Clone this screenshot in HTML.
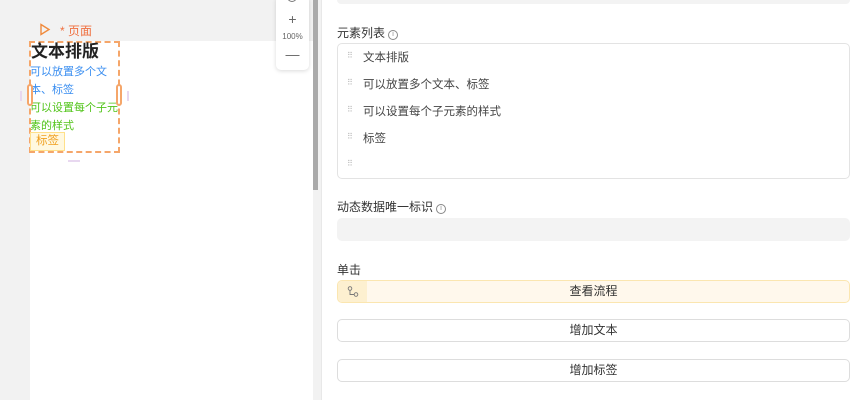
<!DOCTYPE html>
<html><head><meta charset="utf-8"><style>
*{margin:0;padding:0;box-sizing:border-box}
body{width:857px;height:400px;overflow:hidden;background:#fff;font-family:"Liberation Sans","Noto Sans CJK SC",sans-serif;font-size:12px;color:#333;position:relative}
.a{position:absolute}
.lbl{position:absolute;left:337px;font-size:12px;color:#333}
.info{display:inline-block;width:10px;height:10px;border:1px solid #888;border-radius:50%;font-size:7px;line-height:8px;text-align:center;color:#888;vertical-align:1px;margin-left:3px}
.btn{position:absolute;left:337px;width:513px;height:23px;border:1px solid #ddd;border-radius:5px;text-align:center;line-height:21px;font-size:12px;color:#333}
.item{position:absolute;left:10px;font-size:11.5px;color:#444}
.dots{position:absolute;left:-1px;color:#bbb;font-size:8px;letter-spacing:-1px}
</style></head><body>
<div class="a" style="left:0;top:0;width:321px;height:400px;background:#f2f2f2"></div>
<div class="a" style="left:30px;top:41px;width:283px;height:359px;background:#fff"></div>
<div class="a" style="left:313px;top:0;width:5px;height:190px;background:#aaa"></div>
<div class="a" style="left:321px;top:0;width:1px;height:400px;background:#e8e8e8"></div>
<div class="a" style="left:276px;top:-4px;width:33px;height:74px;background:#fff;border-radius:5px;box-shadow:0 1px 4px rgba(0,0,0,.15);text-align:center;color:#666">
<div style="position:absolute;top:-2px;left:11px;width:10px;height:8px;border:1px solid #777;border-top:none;border-radius:0 0 5px 5px"></div>
<div style="position:absolute;top:15px;width:33px;font-size:14px">+</div>
<div style="position:absolute;top:36px;width:33px;font-size:8px">100%</div>
<div style="position:absolute;top:50px;width:33px;font-size:14px">—</div>
</div>
<svg class="a" style="left:39px;top:23px" width="12" height="13"><path d="M2 1.5L10 6.5L2 11.5Z" fill="none" stroke="#f08a3c" stroke-width="1.4"/></svg>
<div class="a" style="left:60px;top:22px;font-size:12px;color:#f07040">* 页面</div>
<div class="a" style="left:29px;top:41px;width:91px;height:112px;border:2px dashed #f5a66a"></div>
<div class="a" style="left:31px;top:41px;font-size:17px;font-weight:bold;color:#222;line-height:22px">文本排版</div>
<div class="a" style="left:30px;top:63px;width:90px;font-size:11px;line-height:18px;color:#3a8ef0">可以放置多个文本、标签</div>
<div class="a" style="left:30px;top:99px;width:90px;font-size:11px;line-height:18px;color:#52c41a">可以设置每个子元素的样式</div>
<div class="a" style="left:30px;top:132px;width:35px;height:19px;background:#fff8e0;border:1px solid #ffe08a;color:#f0a020;font-size:11.5px;text-align:center;line-height:17px">标签</div>
<div class="a" style="left:116px;top:84px;width:6px;height:22px;border:2px solid #f5a66a;border-radius:3px;background:#fff"></div>
<div class="a" style="left:27px;top:84px;width:6px;height:22px;border:2px solid #f5a66a;border-radius:3px;background:#fff"></div>
<div class="a" style="left:20px;top:91px;width:2px;height:10px;background:#e8d8f0"></div>
<div class="a" style="left:127px;top:91px;width:2px;height:10px;background:#e8d8f0"></div>
<div class="a" style="left:68px;top:160px;width:12px;height:2px;background:#e8d8f0"></div>

<div class="a" style="left:337px;top:0;width:513px;height:4px;background:#f3f3f3;border-radius:0 0 5px 5px"></div>
<div class="lbl" style="top:24px">元素列表<span class="info">i</span></div>
<div class="a" style="left:337px;top:43px;width:513px;height:136px;border:1px solid #e3e3e3;border-radius:5px">
<div class="a" style="left:10px;top:5px;width:400px;height:130px">
<div class="item" style="left:0;top:0"><span class="dots" style="top:2px">⠿</span><span style="margin-left:15px">文本排版</span></div>
<div class="item" style="left:0;top:27px"><span class="dots" style="top:2px">⠿</span><span style="margin-left:15px">可以放置多个文本、标签</span></div>
<div class="item" style="left:0;top:54px"><span class="dots" style="top:2px">⠿</span><span style="margin-left:15px">可以设置每个子元素的样式</span></div>
<div class="item" style="left:0;top:81px"><span class="dots" style="top:2px">⠿</span><span style="margin-left:15px">标签</span></div>
<div class="item" style="left:0;top:108px"><span class="dots" style="top:2px">⠿</span></div>
</div></div>
<div class="lbl" style="top:198px">动态数据唯一标识<span class="info">i</span></div>
<div class="a" style="left:337px;top:218px;width:513px;height:23px;background:#f3f3f3;border-radius:5px"></div>
<div class="lbl" style="top:261px">单击</div>
<div class="a" style="left:337px;top:280px;width:513px;height:23px;background:#fff8ec;border:1px solid #fbe6b0;border-radius:5px;text-align:center;line-height:21px">
<div class="a" style="left:0;top:0;width:29px;height:21px;background:#fdf0d0;border-radius:4px 0 0 4px"></div>
<svg class="a" style="left:9px;top:5px" width="12" height="11"><circle cx="3" cy="2.5" r="1.8" fill="none" stroke="#777" stroke-width=".9"/><circle cx="9" cy="8.5" r="1.8" fill="none" stroke="#777" stroke-width=".9"/><path d="M3 4.3V8.5H7.2" fill="none" stroke="#777" stroke-width=".9"/></svg>
<span style="font-size:12px;color:#333">查看流程</span></div>
<div class="btn" style="top:319px">增加文本</div>
<div class="btn" style="top:359px">增加标签</div>
</body></html>
